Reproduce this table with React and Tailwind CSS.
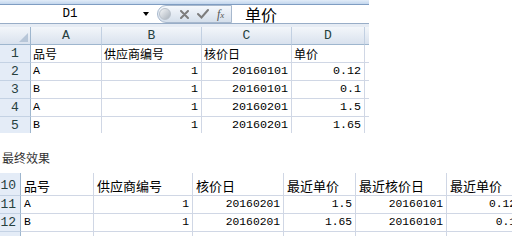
import React from 'react';

// top sheet (A-D) and bottom sheet (result) data
const topRows = [
  ['1', '品号', '供应商编号', '核价日', '单价'],
  ['2', 'A', '1', '20160101', '0.12'],
  ['3', 'B', '1', '20160101', '0.1'],
  ['4', 'A', '1', '20160201', '1.5'],
  ['5', 'B', '1', '20160201', '1.65'],
];
const topCols = ['w-[71px]', 'w-[100px]', 'w-[90px]', 'w-[73px]', 'w-[40px]'];

const bottomRows = [
  ['10', '品号', '供应商编号', '核价日', '最近单价', '最近核价日', '最近单价', 'h-[20px]'],
  ['11', 'A', '1', '20160201', '1.5', '20160101', '0.12', 'h-[18px]'],
  ['12', 'B', '1', '20160201', '1.65', '20160101', '0.1', 'h-[18px]'],
];
const bottomCols = ['w-[73px]', 'w-[99px]', 'w-[91px]', 'w-[72px]', 'w-[91px]', 'w-[73px]'];

const Cell = ({ w, v, big, cls = 'h-full' }) => {
  const isNum = /^[\d.]+$/.test(v);
  const isLatin = /^[A-Za-z]+$/.test(v);
  let text;
  if (isNum) {
    text = big
      ? "justify-end pr-[3px] font-['Liberation_Mono',monospace] text-[11.3px]"
      : "justify-end pr-[3px] font-['Liberation_Mono',monospace] text-[11.7px]";
  } else if (isLatin) {
    text = big
      ? "pl-[3px] font-['Liberation_Mono',monospace] text-[11.3px]"
      : "pl-[2px] font-['Liberation_Mono',monospace] text-[11.7px]";
  } else {
    text = big
      ? "pl-[3px] font-['Noto_Sans_CJK_SC',sans-serif] text-[13px]"
      : "pl-[2px] font-['Noto_Sans_CJK_SC',sans-serif] text-[12px]";
  }
  return (
    <div
      className={`${w} ${cls} shrink-0 flex items-center overflow-hidden whitespace-nowrap leading-none text-black border-r border-b border-[#d0d7e5] ${text}`}
    >
      {v}
    </div>
  );
};

const FormulaBar = () => (
  <div className="flex h-[18px] items-center bg-white">
    <div className="w-[140px] text-center font-['Liberation_Mono',monospace] text-[12.5px] leading-none text-black">
      D1
    </div>
    <div className="ml-[3px] h-0 w-0 border-l-[3px] border-r-[3px] border-t-[4px] border-l-transparent border-r-transparent border-t-black" />
    <div className="ml-[8px] flex h-[18px] w-[75px] items-center rounded-l-full border border-[#a7b8cd] bg-gradient-to-b from-[#f5f8fc] to-[#d5dfeb]">
      <div className="ml-px h-[12px] w-[12px] rounded-full border border-[#b9c1cb] bg-gradient-to-br from-[#f4f6f8] to-[#a9b2bc]" />
      <svg className="ml-[9px]" width="9" height="9" viewBox="0 0 9 9">
        <path d="M1 1 L8 8 M8 1 L1 8" stroke="#7d7d7d" strokeWidth="2" strokeLinecap="round" />
      </svg>
      <svg className="ml-[8px]" width="12" height="10" viewBox="0 0 12 10">
        <path d="M1 5 L4.5 8.5 L11 1" stroke="#7d7d7d" strokeWidth="2" fill="none" strokeLinecap="round" />
      </svg>
      <span className="ml-[8px] font-['Liberation_Serif',serif] italic text-[12px] leading-none text-[#555]">
        f<span className="text-[9px]">x</span>
      </span>
    </div>
    <div className="ml-[13px] font-['Noto_Sans_CJK_SC',sans-serif] text-[16px] leading-none text-black">
      单价
    </div>
  </div>
);

const TopSheet = () => (
  <div className="w-[369px] h-[133px] overflow-hidden">
    <div className="h-[4px] bg-gradient-to-b from-[#e2ecf8] to-[#c3d6ed]" />
    <div className="h-px bg-[#7f9dc2]" />
    <FormulaBar />
    <div className="h-px bg-[#98adc7]" />
    <div className="h-[3px] bg-[#e6ecf4]" />

    {/* column headers */}
    <div className="flex h-[18px]">
      <div className="relative w-[31px] h-full shrink-0 border-r border-b border-[#9eb6ce] bg-gradient-to-b from-[#f3f6fa] to-[#d9e2ee]">
        <svg className="absolute right-[2px] bottom-[2px]" width="9" height="9" viewBox="0 0 9 9">
          <path d="M9 0 L9 9 L0 9 Z" fill="#b7c6d8" />
        </svg>
      </div>
      {['A', 'B', 'C', 'D', ''].map((h, i) => (
        <div
          key={i}
          className={`${topCols[i]} h-full shrink-0 flex items-center justify-center border-r border-b border-r-[#c2d0e2] border-b-[#9eb6ce] bg-gradient-to-b from-[#f3f6fa] to-[#d9e2ee] font-['Liberation_Mono',monospace] text-[13px] leading-none text-[#27413e]`}
        >
          {h}
        </div>
      ))}
    </div>

    {topRows.map((r) => (
      <div key={r[0]} className="flex h-[18px]">
        <div className="w-[31px] h-full shrink-0 flex items-center justify-center border-r border-b border-r-[#9eb6ce] border-b-[#c4d2e4] bg-[#e4ecf7] font-['Liberation_Mono',monospace] text-[13px] leading-none text-[#27413e]">
          {r[0]}
        </div>
        {r.slice(1).map((v, i) => (
          <Cell key={i} w={topCols[i]} v={v} />
        ))}
        <Cell w={topCols[4]} v="" />
      </div>
    ))}
  </div>
);

const BottomSheet = () => (
  <div className="w-[512px] h-[63px] overflow-hidden">
    <div className="flex h-[3px]">
      <div className="w-[21px] h-full shrink-0 border-r border-[#9eb6ce] bg-[#e4ecf7]" />
      {bottomCols.map((w, i) => (
        <div key={i} className={`${w} h-full shrink-0 border-r border-[#d0d7e5]`} />
      ))}
    </div>
    {bottomRows.map((r) => (
      <div key={r[0]} className={`flex ${r[7]}`}>
        <div className="w-[21px] h-full shrink-0 flex items-center justify-end pr-[4px] overflow-hidden border-r border-b border-r-[#9eb6ce] border-b-[#c4d2e4] bg-[#e4ecf7] font-['Liberation_Mono',monospace] text-[13px] leading-none text-[#27413e]">
          {r[0]}
        </div>
        {r.slice(1, 7).map((v, i) => (
          <Cell key={i} w={bottomCols[i]} v={v} big />
        ))}
      </div>
    ))}
    <div className="flex h-[4px]">
      <div className="w-[21px] h-full shrink-0 border-r border-[#9eb6ce] bg-[#e4ecf7]" />
      {bottomCols.map((w, i) => (
        <div key={i} className={`${w} h-full shrink-0 border-r border-[#d0d7e5]`} />
      ))}
    </div>
  </div>
);

export default function App() {
  return (
    <div className="w-[531px] h-[248px] overflow-hidden bg-white">
      <TopSheet />
      <div className="h-[40px] pt-[17px] pl-[2px] font-['Noto_Sans_CJK_SC',sans-serif] text-[12px] leading-[16px] text-[#333]">
        最终效果
      </div>
      <BottomSheet />
    </div>
  );
}
